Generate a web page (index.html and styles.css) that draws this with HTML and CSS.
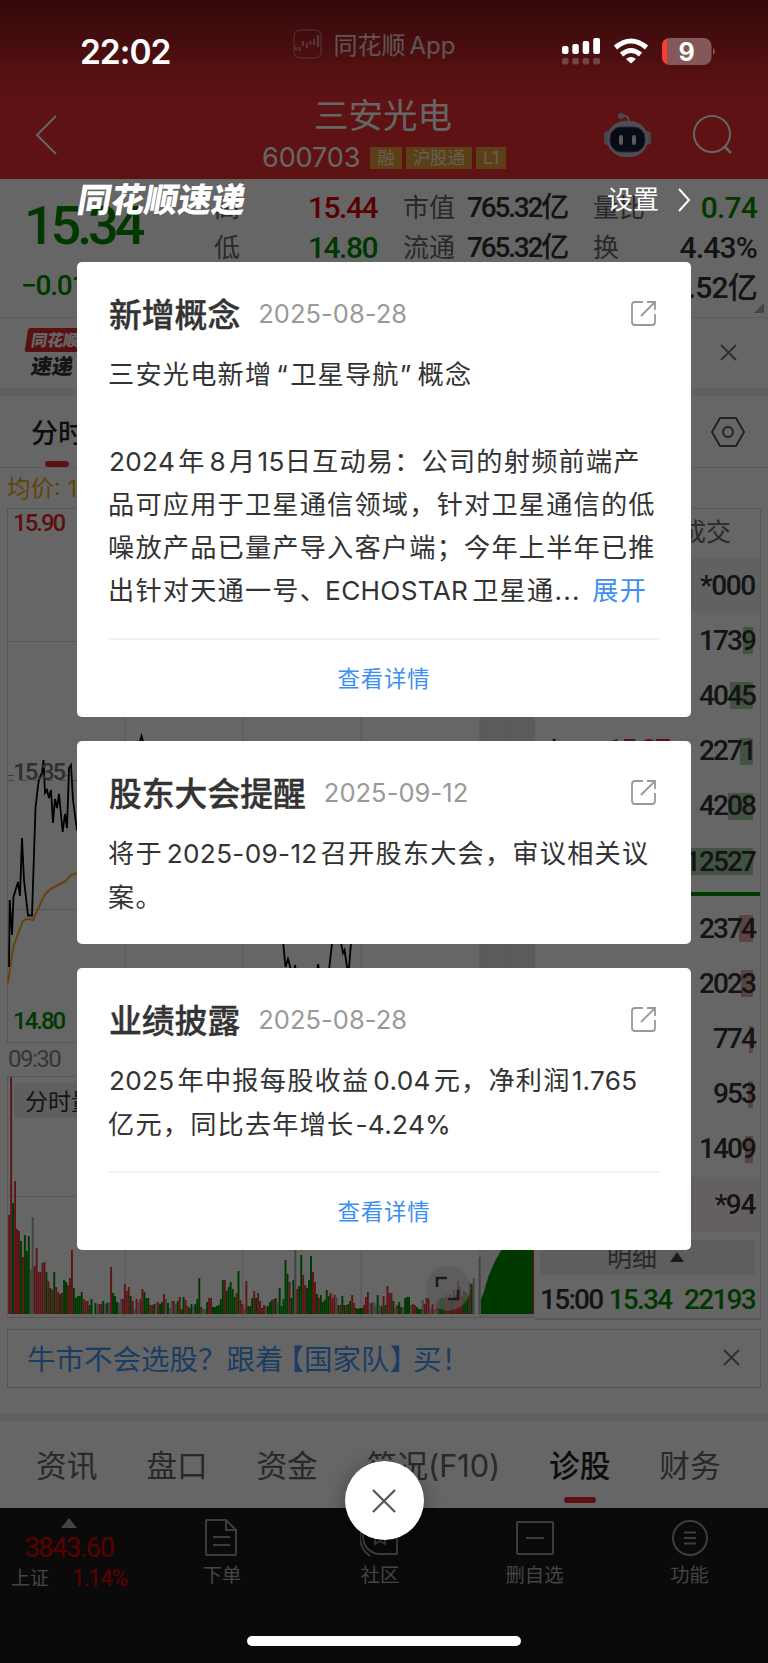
FILE: index.html
```
<!DOCTYPE html>
<html lang="zh-CN">
<head>
    <meta charset="UTF-8">
    <meta name="viewport" content="width=device-width, initial-scale=1.0">
    <title>三安光电 600703</title>
    <link rel="stylesheet" href="styles.css">
</head>
<body>
<div class="phone">
    <div class="app">
        <header class="header">
            <div class="brand">
                <svg width="30" height="30" viewBox="0 0 30 30" fill="none" stroke="#fff" stroke-opacity=".6">
                    <rect x="1" y="1" width="27" height="28" rx="6"/>
                    <path d="M3 18v3M6.500 18v4M10 12v5M14 14v5M17.500 12v4M21 10v6M25 6v12" stroke-width="2.200"/>
                </svg>
                <span>同花顺<u>App</u></span>
            </div>
            <div class="nav">
                <svg class="back" width="26" height="42" viewBox="0 0 26 42"><path d="M22 2 3 21l19 19" fill="none" stroke="#fff" stroke-width="2"/></svg>
                <div class="stock">
                    <h1>三安光电</h1>
                    <div class="code"><span>600703</span><i>融</i><i>沪股通</i><i>L1</i></div>
                </div>
                <div class="nav-right">
                    <svg width="50" height="48" viewBox="0 0 50 48">
                        <path d="M18 5q8-2 8 7" fill="none" stroke="#c5c9d2" stroke-width="2"/>
                        <circle cx="18" cy="5" r="3" fill="#aeb6c4"/>
                        <rect x="1" y="20" width="9" height="14" rx="4" fill="#aab0be"/>
                        <rect x="39" y="20" width="9" height="14" rx="4" fill="#aab0be"/>
                        <rect x="4" y="10" width="41" height="36" rx="18" fill="#c0c4cd"/>
                        <rect x="7" y="16" width="35" height="25" rx="11" fill="#141a35" stroke="#6659a8"/>
                        <rect x="16" y="24" width="4" height="10" rx="2" fill="#dfe3e6"/>
                        <rect x="29" y="24" width="4" height="10" rx="2" fill="#dfe3e6"/>
                    </svg>
                    <svg width="42" height="42" viewBox="0 0 42 42" fill="none" stroke="#fff" stroke-width="2"><circle cx="20" cy="20" r="18"/><path d="m32 32 7 7" stroke-width="2.500"/></svg>
                </div>
            </div>
        </header>

        <section class="quote">
            <div class="price green">15.34</div>
            <div class="change green">−0.01 -0.07%</div>
            <div class="grid">
                <span>高</span><b class="red">15.44</b><span>市值</span><b class="cap">765.32亿</b><span>量比</span><b class="green">0.74</b>
                <span>低</span><b class="green">14.80</b><span>流通</span><b class="cap">765.32亿</b><span>换</span><b>4.43%</b>
                <span>开</span><b class="red">15.37</b><span>市盈</span><b class="cap">87.01</b><span>额</span><b class="amount">33.52亿</b>
            </div>
            <i class="corner"></i>
        </section>

        <section class="news">
            <div class="news-logo"><span>同花顺</span><b>速递</b></div>
            <svg width="17" height="17" viewBox="0 0 17 17"><path d="m1 1 15 15M16 1 1 16" stroke="#777" stroke-width="2"/></svg>
        </section>

        <section class="periods">
            <span class="period active">分时</span>
            <svg width="34" height="34" viewBox="0 0 34 34" fill="none" stroke="#555" stroke-width="2"><path d="M9 3h16l8 14-8 14H9L1 17z"/><circle cx="17" cy="17" r="5"/></svg>
        </section>
        <div class="avg">均价: 15.13</div>

        <section class="market">
            <svg class="chart" width="535" height="812" viewBox="0 508 535 812">
                <rect x="480" y="508" width="55" height="534" fill="#e4e4e4"/>
                <rect x="480" y="1076" width="55" height="242" fill="#f3f3f3"/>
                <g stroke="#d9d9d9" fill="none">
                    <path d="M7.500 508.500H535M8 641.500h472M8 909.500h472M7.500 1042.500H535M7.500 508v534.500M125 508v534M243 508v534M361 508v534M480 508v534"/>
                    <path d="M7.500 1076.500H535M8 1196.500h472M7.500 1317.500H535M7.500 1076v242M125 1076v242M243 1076v242M361 1076v242M480 1076v242"/>
                    <path d="M508.500 508v534" stroke-dasharray="3 4"/>
                </g>
                <path d="M8 780.500H480" stroke="#e0a878" stroke-dasharray="6 7"/>
                <path d="M8 775.500h6M66 775.500h5" stroke="#999"/>
                <path d="M8 983 12 955 14 945 18 934 23 921Q25 919 29 919L33 920 38 909 44 896Q48 890 56 886L66 881 71 875 77 873 130 850 200 860 300 880 480 878" fill="none" stroke="#ffa71a" stroke-width="2"/>
                <path d="M9 967 9.700 900 12 935 13.500 897 18 882 20 896 22 838 24 880 28 915.500H32L35.500 808 37.500 790 39 779 42 773 43.500 760 45 793 47 790 49 798 51 790 53 823 55 799 57 808 59 794 62.700 832 65 814 67 828 69 768 71 765 73 800 77 830 100 850 139 745 141.500 736 144 745 200 800 282 930 285.500 967 288 959 291 970 293 980 295 965 298 985 316 985 318 964 320 975 329 970 333 935 337 925 341 943 343 953 344.500 950 347 967 349 968 351 943 353 930 359 940 400 880 480 800" fill="none" stroke="#000" stroke-width="1.800"/>
                <g class="axis">
                    <text x="13" y="531" fill="#e8262d">15.90</text>
                    <text x="13" y="780" fill="#777">15.35</text>
                    <text x="13" y="1029" fill="#008c00">14.80</text>
                    <text x="8" y="1067" fill="#888" class="hour">09:30</text>
                </g>
                <g id="volume"></g>
                <path d="M481 1314V1299L484 1292 486 1284 489 1275 492 1268 495 1261 498 1256 500 1252 503 1248H533V1314z" fill="#009000"/>
                <path d="M533.500 1248v66" stroke="#e03030"/>
                <rect x="14" y="1083" width="100" height="35" rx="4" fill="#eee"/>
                <text x="25" y="1110" class="vol-label">分时量</text>
                <circle cx="448" cy="1288" r="22.500" fill="#ddd" fill-opacity=".65"/>
                <path d="M437 1287v-9h10M448 1299h10v-9" fill="none" stroke="#444" stroke-width="2.500"/>
            </svg>
            <div class="book">
                <div class="book-head">成交</div>
                <div class="row total sell">*000</div>
                <div class="row sell"><span>卖5</span><em>15.39</em><b>1739</b><i style="width:10px"></i></div>
                <div class="row sell"><span>卖4</span><em>15.38</em><b>4045</b><i style="width:23px"></i></div>
                <div class="row sell"><span>卖3</span><em>15.37</em><b>2271</b><i style="width:13px"></i></div>
                <div class="row sell"><span>卖2</span><em>15.36</em><b>4208</b><i style="width:25px"></i></div>
                <div class="row sell"><span>卖1</span><em>15.35</em><b>12527</b><i style="width:65px"></i></div>
                <div class="ratio"></div>
                <div class="row buy"><span>买1</span><em>15.34</em><b>2374</b><i style="width:14px"></i></div>
                <div class="row buy"><span>买2</span><em>15.33</em><b>2023</b><i style="width:12px"></i></div>
                <div class="row buy"><span>买3</span><em>15.32</em><b>774</b><i style="width:4px"></i></div>
                <div class="row buy"><span>买4</span><em>15.31</em><b>953</b><i style="width:5px"></i></div>
                <div class="row buy"><span>买5</span><em>15.30</em><b>1409</b><i style="width:8px"></i></div>
                <div class="row total buy">*94</div>
                <div class="detail">明细 <i></i></div>
                <div class="tick"><span>15:00</span><span class="green">15.34</span><span class="green last">22193</span></div>
            </div>
        </section>

        <div class="banner">
            <span>牛市不会选股？跟着<s class="open">【</s>国家队<s>】</s>买！</span>
            <svg width="17" height="17" viewBox="0 0 17 17"><path d="m1 1 15 15M16 1 1 16" stroke="#777" stroke-width="2"/></svg>
        </div>

        <nav class="tabs">
            <span>资讯</span><span>盘口</span><span>资金</span><span>简况(F10)</span><span class="active">诊股</span><span>财务</span>
        </nav>

        <footer class="toolbar">
            <div class="index">
                <i class="up"></i>
                <b>3843.60</b>
                <div><span>上证</span><em>1.14%</em></div>
            </div>
            <div class="tool">
                <svg width="40" height="40" viewBox="0 0 40 40"><path d="M5 2h19l10 10v24q0 1-1 1H5q-1 0-1-1V3q0-1 1-1zM24 2v10h10M11 19h17M11 27h17"/></svg>
                下单
            </div>
            <div class="tool">
                <svg width="40" height="40" viewBox="0 0 40 40"><path d="M20 2a17 17 0 0 1 17 17v17H20A17 17 0 0 1 20 2zM1 12a23 23 0 0 0 9 26"/><path d="m15 13 5 3 5-3v13l-5-3-5 3z"/></svg>
                社区
            </div>
            <div class="tool">
                <svg width="40" height="40" viewBox="0 0 40 40"><rect x="2" y="4" width="36" height="32" rx="1"/><path d="M11 20h18"/></svg>
                删自选
            </div>
            <div class="tool">
                <svg width="40" height="40" viewBox="0 0 40 40"><circle cx="20" cy="20" r="17"/><path d="M14 14.500h12M14 20h12M14 25.500h12"/></svg>
                功能
            </div>
        </footer>
    </div>

    <div class="overlay">
        <div class="status">
            <span class="time">22:02</span>
            <svg width="160" height="30" viewBox="0 0 160 30">
                <g fill="#fff">
                    <rect x="2" y="9" width="6.500" height="8" rx="2"/><rect x="12.300" y="7" width="6.500" height="10" rx="2"/><rect x="22.700" y="4" width="6.500" height="13" rx="2"/><rect x="33.200" y="1" width="6.800" height="16" rx="2"/>
                    <g opacity=".22"><rect x="2" y="21" width="6.500" height="6.500" rx="2"/><rect x="12.300" y="21" width="6.500" height="6.500" rx="2"/><rect x="22.700" y="21" width="6.500" height="6.500" rx="2"/><rect x="33.200" y="21" width="6.800" height="6.500" rx="2"/></g>
                    <path d="m71 26.500-5-4.500q5-4 10 0z"/>
                </g>
                <path d="M61.500 17.500q9.500-8 19 0M55.500 10.500q15.500-13 31 0" fill="none" stroke="#fff" stroke-width="5"/>
                <clipPath id="bat"><rect x="102" y="1" width="49.500" height="27" rx="8"/></clipPath>
                <g clip-path="url(#bat)"><rect x="102" y="1" width="50" height="27" fill="#84585b"/><rect x="102" y="1" width="5" height="27" fill="#ff3b30"/></g>
                <path d="M153 11q4 3.500 0 7z" fill="#84585b"/>
                <text x="126.500" y="23.500" class="battery">9</text>
            </svg>
        </div>
        <div class="pop-head">
            <span class="pop-title">同花顺速递</span>
            <span class="setting">设置<svg width="14" height="24" viewBox="0 0 14 24"><path d="m2 1 10 11L2 23" fill="none" stroke="#fff" stroke-width="2"/></svg></span>
        </div>

        <article class="card">
            <div class="card-head"><h2>新增概念</h2><time>2025-08-28</time><svg class="share" width="26" height="26" viewBox="0 0 26 26"><path d="M12 1H4Q1 1 1 4v17q0 3 3 3h17q3 0 3-3v-8M16 1h8v8M24 1 10 15"/></svg></div>
            <p>三安光电新增<u class="quot">“</u>卫星导航<u class="end">”</u>概念<br><br><u class="first">2024</u>年<u>8</u>月<u class="tight">15</u>日互动易：公司的射频前端产<br>品可应用于卫星通信领域，针对卫星通信的低<br>噪放产品已量产导入客户端；今年上半年已推<br>出针对天通一号、<u class="latin">ECHOSTAR</u>卫星通... <a>展开</a></p>
            <div class="more">查看详情</div>
        </article>

        <article class="card">
            <div class="card-head"><h2>股东大会提醒</h2><time>2025-09-12</time><svg class="share" width="26" height="26" viewBox="0 0 26 26"><path d="M12 1H4Q1 1 1 4v17q0 3 3 3h17q3 0 3-3v-8M16 1h8v8M24 1 10 15"/></svg></div>
            <p>将于<u>2025-09-12</u>召开股东大会，审议相关议<br>案。</p>
        </article>

        <article class="card">
            <div class="card-head"><h2>业绩披露</h2><time>2025-08-28</time><svg class="share" width="26" height="26" viewBox="0 0 26 26"><path d="M12 1H4Q1 1 1 4v17q0 3 3 3h17q3 0 3-3v-8M16 1h8v8M24 1 10 15"/></svg></div>
            <p><u class="first">2025</u>年中报每股收益<u>0.04</u>元，净利润<u class="tight">1.765</u><br>亿元，同比去年增长<u class="first">-4.24%</u></p>
            <div class="more">查看详情</div>
        </article>

        <button class="close"><svg width="24" height="24" viewBox="0 0 24 24"><path d="m1 1 22 22M23 1 1 23" stroke="#555" stroke-width="2.200"/></svg></button>
        <i class="home"></i>
    </div>
</div>

<script>
    // 分时成交量: r 涨 g 跌 k 平
    var volume = 'r99 r237 g111 r133 r85 r83 g73 r57 g79 g63 g78 k45 k97 r48 r66 r42 r42 r51 r52 g42 r33 g26 r24 g42 r27 r22 g20 r21 g34 g32 r29 r36 r64 g26 g16 g18 g18 g22 r15 r13 r13 g9 g15 k0 g11 k10 r10 r10 g13 k10 g11 k12 r47 g21 g18 g12 k11 k15 r15 r30 r23 r27 g18 r13 k5 r15 k12 r15 r25 g22 g16 g16 r9 r9 g10 k11 r12 g10 g12 r20 k15 g11 k6 k13 r13 k10 g13 r17 g5 g17 r14 r8 g6 g10 k8 g10 g15 g36 r7 k5 k5 g12 r16 r16 g7 g7 g8 g9 g15 g34 r34 g23 g27 g32 g25 g17 r21 g43 r14 r10 k5 r33 g8 g8 g16 r23 g16 r21 r13 r6 r9 k8 g8 g12 g14 r15 g16 k12 g26 g8 g15 g54 g40 r32 g16 g34 k64 r25 g28 g59 r39 r29 g26 g34 g58 r42 r32 g20 r16 g19 g12 g14 g24 g18 r21 r16 r19 k17 g9 r9 g18 g9 r9 g10 g13 r19 r11 g6 g5 g6 g6 r9 r17 r22 k11 r11 k12 k9 g19 k9 g8 r18 g9 r28 r21 r21 g13 k7 r9 g12 g7 k7 g16 g17 g17 k9 r10 r9 g7 g5 g5 k14 r10 r16 r16 k6 r10 k5 k11 r13 g16 g17 g15 r19 r16 r20 g14 r24 r19 r33 r27 r18 g23 g22 g19 r31 g30 k36 k0 k0 k57'.split(' ');
    var fill = { r: '#e8383d', g: '#009000', k: '#aaa' };
    document.getElementById('volume').innerHTML = volume.map(function(v, i) {
        var h = +v.slice(1);
        return '<rect x="' + (8.2 + i * 1.96) + '" y="' + (1314 - h) + '" width="1.96" height="' + h + '" fill="' + fill[v[0]] + '"/>';
    }).join('');
</script>
</body>
</html>
```
FILE: styles.css
```
* {
    margin: 0;
    padding: 0;
    box-sizing: border-box;
}

body {
    font-family: Inter, "Noto Sans CJK SC", sans-serif;
    color: #333;
    white-space: nowrap;
}

i, em, s, u {
    font-style: normal;
    text-decoration: none;
}

.phone {
    position: relative;
    width: 768px;
    height: 1663px;
    overflow: hidden;
}

.app {
    height: 1663px;
    background: #fff;
    isolation: isolate;
}

.red { color: #e00000; }
.green { color: #008c00; }

/* header */
.header {
    height: 179px;
    padding-top: 28px;
    background: linear-gradient(#7f1719 0, #a82024 35px, #d6292e 75px, #eb2d32 100px);
    color: #fff;
}

.brand {
    display: flex;
    justify-content: center;
    align-items: center;
    gap: 11px;
    height: 32px;
    padding-right: 20px;
    font-size: 24px;
    opacity: .8;
}

.brand span { margin-top: -2px; }
.brand u { margin-left: 4px; }

.nav {
    display: grid;
    grid-template-columns: 200px 368px 200px;
    height: 119px;
    align-items: center;
}

.back { margin: 31px 0 0 34px; }

.stock { text-align: center; }

.stock h1 {
    font-size: 34.500px;
    font-weight: 400;
    line-height: 42px;
    margin: 34px 2px 0 0;
}

.code {
    display: flex;
    justify-content: center;
    align-items: center;
    gap: 4px;
    height: 42px;
    font-size: 27px;
    letter-spacing: -.100px;
}

.code span { margin-right: 6px; }

.code i {
    height: 22px;
    padding: 0 7px;
    background: #e59b3a;
    color: #ffeecb;
    font-size: 17.500px;
    line-height: 21px;
}

.nav-right {
    display: flex;
    align-items: center;
    gap: 39px;
    margin: 30px 0 0 35px;
}

/* quote */
.quote {
    display: grid;
    grid-template-columns: 206px 1fr;
    grid-template-rows: 83px 40px;
    position: relative;
    height: 139px;
    padding: 9px 11px 0 8px;
    border-bottom: 1px solid #e6e6e6;
}

.quote, .book, .axis, .tick, .index {
    font-family: Roboto, "Noto Sans CJK SC", sans-serif;
}

.price {
    padding: 1px 0 0 16px;
    font-size: 54px;
    font-weight: 500;
    line-height: 74px;
    letter-spacing: -4.100px;
}

.change {
    grid-row: 2;
    padding: 1px 0 0 13px;
    font-size: 28px;
    font-weight: 500;
    line-height: 28px;
    letter-spacing: -1.200px;
}

.grid {
    grid-column: 2;
    grid-row: 1 / 3;
    display: grid;
    grid-template-columns: 53px 110px 26px 64px 100px 26px 60px 1fr;
    grid-auto-rows: 40px;
    align-items: center;
    font-size: 26px;
    color: #666;
}

.grid b {
    font-size: 30px;
    font-weight: 500;
    letter-spacing: -1.500px;
    text-align: right;
    line-height: 38px;
}

.grid span { line-height: 38px; }
.grid b:not(.red):not(.green) { color: #333; }
.grid .cap { font-size: 28px; text-align: left; letter-spacing: -2.200px; }
.grid span:nth-child(6n+1) { grid-column: 1; }
.grid b:nth-child(6n+2) { grid-column: 2; }
.grid span:nth-child(6n+3) { grid-column: 4; }
.grid b:nth-child(6n+4) { grid-column: 5; }
.grid span:nth-child(6n+5) { grid-column: 7; }
.grid b:nth-child(6n) { grid-column: 8; margin-left: -20px; letter-spacing: -.800px; }

.corner {
    position: absolute;
    right: 4px;
    bottom: 4px;
    border: 5px solid #aaa;
    border-top-color: transparent;
    border-left-color: transparent;
}

.news {
    display: flex;
    justify-content: space-between;
    align-items: center;
    height: 78px;
    padding: 0 31px 8px 25px;
    border-bottom: 8px solid #f1f1f1;
}

.news svg { margin-top: 6px; }

.news-logo {
    width: 62px;
    padding-top: 11px;
    transform: skewX(-9deg);
    line-height: 24px;
}

.news-logo span {
    display: block;
    padding-left: 5px;
    background: #e0262c;
    border-radius: 2px;
    color: #fff;
    font-size: 16px;
    font-weight: 900;
}

.news-logo b {
    display: block;
    padding-left: 9px;
    color: #333;
    font-size: 21px;
    font-weight: 900;
    line-height: 29px;
}

.periods {
    display: flex;
    justify-content: space-between;
    align-items: center;
    height: 72px;
    padding: 0 23px 0 31px;
    border-bottom: 1px solid #e3e3e3;
}

.period {
    position: relative;
    color: #222;
    font-size: 27px;
    font-weight: 500;
}

.active::after {
    content: "";
    position: absolute;
    bottom: -16px;
    left: calc(50% - 13px);
    width: 24px;
    height: 6px;
    border-radius: 3px;
    background: #e8262d;
}

.avg {
    height: 40px;
    padding: 0 7px;
    color: #f0a818;
    font-size: 23.500px;
    line-height: 41px;
}

/* chart + order book */
.market {
    display: flex;
    height: 812px;
}

.chart { display: block; }

.axis {
    font-size: 24px;
    font-weight: 500;
    letter-spacing: -2px;
}

.axis .hour {
    font-weight: 400;
    letter-spacing: -1.500px;
}

.vol-label {
    fill: #333;
    font-size: 23px;
}

.book {
    width: 226px;
    border: solid #ddd;
    border-width: 1px 1px 2px 0;
    color: #333;
}

.book-head {
    height: 49px;
    padding-right: 29px;
    color: #666;
    font-size: 25px;
    line-height: 48px;
    text-align: right;
}

.row {
    display: grid;
    grid-template-columns: 40px 1fr 86px;
    align-items: center;
    justify-items: end;
    position: relative;
    height: 55.200px;
    padding: 0 5px;
    font-size: 28px;
    font-weight: 500;
    letter-spacing: -1.900px;
}

.row b { font-weight: 500; z-index: 1; margin-top: -1px; }
.row em { color: #e8262d; margin-top: -4px; }

.row i {
    position: absolute;
    right: 7px;
    top: 14px;
    height: 27px;
    background: #a9d0a9;
}

.row.buy i { background: #dfa9a9; }
.row.total { display: block; line-height: 55px; text-align: right; letter-spacing: -1.300px; }
.total.sell { background: #eff5f2; }
.total.buy { background: #faf1f2; }

.ratio {
    height: 4px;
    margin: 3px 0 5px;
    background: #009000;
}

.detail {
    height: 35px;
    margin: 8px 5px 0;
    background: #ebebeb;
    color: #666;
    font-size: 25px;
    line-height: 37px;
    padding-left: 67px;
}

.detail i {
    display: inline-block;
    margin: 0 0 5px 7px;
    border: solid transparent;
    border-width: 0 7px 10px;
    border-bottom-color: #444;
}

.tick {
    display: flex;
    gap: 6px;
    padding: 0 5px 0 5px;
    font-size: 28px;
    font-weight: 500;
    line-height: 49px;
    letter-spacing: -1.700px;
}

.tick .last { margin-left: auto; }

.banner {
    display: flex;
    justify-content: space-between;
    align-items: center;
    height: 59px;
    margin: 9px 7px 25px;
    padding: 0 20px 3px 19px;
    border: 1px solid #cfcfcf;
    color: #4698f5;
    font-size: 28.500px;
}

.banner .open { margin-left: -8px; }
.banner s:not(.open) { margin-right: -5px; }

.tabs {
    display: flex;
    align-items: center;
    height: 95px;
    padding: 0 0 3px 36px;
    border-top: 8px solid #f1f1f1;
    font-size: 30.700px;
    color: #666;
    gap: 48.800px;
}

.tabs .active {
    position: relative;
    color: #222;
    font-weight: 500;
}

.tabs .active::after {
    left: 15px;
    bottom: -17px;
    width: 32px;
}

.toolbar {
    display: grid;
    grid-template-columns: 142px 160px 156px 153px 157px;
    height: 155px;
    padding-top: 10px;
    background: #191919;
    color: #aaa;
}

.tool {
    display: flex;
    flex-direction: column;
    align-items: center;
    font-size: 19.300px;
    line-height: 35px;
}

.tool svg {
    fill: none;
    stroke: #999;
    stroke-width: 2;
}

.index {
    display: flex;
    flex-direction: column;
    align-items: center;
    padding-right: 4px;
    color: #e00000;
    letter-spacing: -1.300px;
}

.index .up {
    border: solid transparent;
    border-width: 0 8px 10px;
    border-bottom-color: #aaa;
}

.index b {
    font-size: 27px;
    font-weight: 400;
    line-height: 40px;
}

.index div {
    display: flex;
    align-items: center;
    gap: 23px;
    font-size: 23px;
    line-height: 22px;
}

.index span { color: #aaa; font-size: 19px; letter-spacing: 0; }

/* popup */
.overlay {
    position: absolute;
    inset: 0;
    padding: 0 77px;
    background: rgba(0, 0, 0, .6);
}

.status {
    display: flex;
    justify-content: space-between;
    align-items: center;
    height: 104px;
    margin: 0 -29px 0 3px;
    color: #fff;
}

.status svg { margin: -1px 0 0; }

.time {
    margin-top: -1px;
    font-size: 33.500px;
    font-weight: 600;
    letter-spacing: -1px;
}

.battery {
    fill: #fff;
    font-size: 25px;
    font-weight: 700;
    text-anchor: middle;
}

.pop-head {
    display: flex;
    justify-content: space-between;
    align-items: flex-start;
    height: 158px;
    padding-top: 75px;
    color: #fff;
    line-height: 42px;
}

.pop-title {
    margin-left: 1px;
    font-size: 33.500px;
    font-weight: 900;
    transform: skewX(-10deg);
}

.setting {
    display: flex;
    align-items: center;
    gap: 18px;
    font-size: 26px;
}

.card {
    width: 614px;
    margin-bottom: 24px;
    padding: 30px 32px 0;
    border-radius: 5px;
    background: #fff;
}

.card-head {
    display: flex;
    align-items: center;
    height: 44px;
}

.card h2 {
    margin-top: -4px;
    font-size: 32.800px;
    font-weight: 500;
    -webkit-text-stroke: .400px #333;
}

.card time {
    margin: -2px 0 0 18px;
    color: #999;
    font-size: 25.500px;
    letter-spacing: .050px;
}

.share {
    margin-left: auto;
    margin-right: 2px;
    fill: none;
    stroke: #999;
    stroke-width: 1.800;
}

.card p {
    margin: 17px 0 0 -1px;
    padding-bottom: 25.500px;
    font-size: 26.200px;
    line-height: 43.300px;
    letter-spacing: 1.200px;
}

.card u { margin: 0 3px 0 4px; letter-spacing: .300px; }
.card u.first { margin-left: 1px; }
.card u.tight { margin: 0 0 0 1px; }
.card u.quot { margin-right: 2px; }
.card u.end { margin-left: 0; margin-right: 6px; }
.card u.latin { margin: 0 4px 0 -2px; }
.card a { margin-left: 3px; color: #3d8ff2; }

.more {
    height: 79px;
    border-top: 2px solid #f1f1f1;
    color: #3d8ff2;
    font-size: 22.400px;
    letter-spacing: .800px;
    line-height: 77px;
    text-align: center;
}

.close {
    position: absolute;
    top: 1461px;
    left: 344.500px;
    display: flex;
    justify-content: center;
    align-items: center;
    width: 79px;
    height: 79px;
    border: 0;
    border-radius: 50%;
    background: #fff;
    box-shadow: 0 4px 20px rgba(0, 0, 0, .35);
}

.home {
    position: absolute;
    bottom: 17px;
    left: 247px;
    width: 274px;
    height: 10px;
    border-radius: 5px;
    background: #fff;
}
```
